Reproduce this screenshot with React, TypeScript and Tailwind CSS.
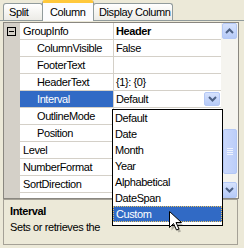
import React from "react";

type Row = {
  name: string;
  value: string;
  bold?: boolean;
  expander?: boolean;
  indent?: boolean;
  selected?: boolean;
};

const rows: Row[] = [
  { name: "GroupInfo", value: "Header", bold: true, expander: true },
  { name: "ColumnVisible", value: "False", indent: true },
  { name: "FooterText", value: "", indent: true },
  { name: "HeaderText", value: "{1}: {0}", indent: true },
  { name: "Interval", value: "Default", indent: true, selected: true },
  { name: "OutlineMode", value: "", indent: true },
  { name: "Position", value: "", indent: true },
  { name: "Level", value: "" },
  { name: "NumberFormat", value: "" },
  { name: "SortDirection", value: "" },
];

const items = ["Default", "Date", "Month", "Year", "Alphabetical", "DateSpan", "Custom"];

function Chevron({ dir }: { dir: "up" | "down" }) {
  return (
    <svg width="9" height="6" viewBox="0 0 9 6">
      <path
        d={dir === "up" ? "M1 5 L4.5 1.5 L8 5" : "M1 1 L4.5 4.5 L8 1"}
        fill="none"
        stroke="#4D6185"
        strokeWidth="2"
      />
    </svg>
  );
}

function XPButton({ dir, className }: { dir: "up" | "down"; className: string }) {
  return (
    <div
      className={`flex items-center justify-center rounded-[2px] border border-[#B4C8F6] bg-gradient-to-b from-[#D6E2FD] to-[#B6CAF7] ${className}`}
    >
      <Chevron dir={dir} />
    </div>
  );
}

export default function App() {
  return (
    <div className="relative w-[244px] h-[248px] overflow-hidden bg-[#ECE9D8] text-[11px] leading-[13px] tracking-[-0.4px] text-black font-['Liberation_Sans',Arial,sans-serif]">
      {/* Tab strip */}
      <div className="flex items-end h-[21px] pl-[3px] border-b border-[#919B9C] whitespace-nowrap">
        <div className="h-[17px] w-[40px] flex items-center pl-[5px] rounded-t-[3px] border border-b-0 border-[#919B9C] bg-gradient-to-b from-white to-[#ECEBE6]">
          Split
        </div>
        <div className="relative z-10 -mb-px -ml-px h-[21px] w-[52px] flex items-center pl-[7px] pt-[1px] rounded-t-[3px] border-x border-[#919B9C] border-t-[3px] border-t-[#FFC83C] bg-[#FCFCFE]">
          Column
        </div>
        <div className="-ml-px h-[17px] w-[80px] flex items-center pl-[5px] rounded-t-[3px] border border-b-0 border-[#919B9C] bg-gradient-to-b from-white to-[#ECEBE6]">
          Display Column
        </div>
      </div>

      {/* Tab page */}
      <div className="pl-[3px] pt-[1px]">
        {/* Property grid */}
        <div className="flex w-[236px] h-[177px] border border-[#8A8780] bg-white">
          <div className="flex w-[217px]">
            <div className="w-[16px] bg-[#D4D0C8]" />
            <div className="flex flex-col w-[201px]">
              {rows.map((r) => (
                <div key={r.name} className="relative flex h-[17px]">
                  {r.expander && (
                    <div className="absolute left-[-13px] top-[4px] w-[9px] h-[9px] border border-black flex items-center justify-center">
                      <div className="w-[5px] h-[1px] bg-black" />
                    </div>
                  )}
                  <div
                    className={`w-[93px] h-[17px] flex items-center border-b border-[#D4D0C8] whitespace-nowrap overflow-hidden ${
                      r.indent ? "pl-[17px]" : "pl-[3px]"
                    } ${r.selected ? "bg-[#316AC5] text-white" : ""}`}
                  >
                    {r.name}
                  </div>
                  <div className="w-[1px] bg-[#D4D0C8]" />
                  <div
                    className={`relative w-[107px] h-[17px] flex items-center pl-[2px] border-b border-[#D4D0C8] whitespace-nowrap overflow-hidden ${
                      r.bold ? "font-bold" : ""
                    }`}
                  >
                    {r.value}
                    {r.selected && (
                      <XPButton dir="down" className="absolute right-[1px] top-[1px] w-[16px] h-[14px]" />
                    )}
                  </div>
                </div>
              ))}
            </div>
          </div>
          {/* Scrollbar */}
          <div className="flex flex-col w-[17px] bg-[#F5F4EF]">
            <XPButton dir="up" className="ml-[1px] w-[15px] h-[16px]" />
            <div className="h-[90px]" />
            <div className="ml-[2px] w-[14px] h-[45px] rounded-[2px] border border-[#B4C8F6] bg-gradient-to-r from-[#CAD8FC] to-[#BCCEF9] flex flex-col items-center justify-center gap-[1px]">
              <div className="w-[6px] h-[1px] bg-[#EEF3FE]" />
              <div className="w-[6px] h-[1px] bg-[#EEF3FE]" />
              <div className="w-[6px] h-[1px] bg-[#EEF3FE]" />
              <div className="w-[6px] h-[1px] bg-[#EEF3FE]" />
            </div>
            <div className="h-[8px]" />
            <XPButton dir="down" className="ml-[1px] w-[15px] h-[16px]" />
          </div>
        </div>

        {/* Help panel */}
        <div className="w-[235px] h-[46px] border border-[#A5A196] pl-[6px] pt-[5px]">
          <div className="font-bold">Interval</div>
          <div className="mt-[3px] whitespace-nowrap">Sets or retrieves the</div>
        </div>
      </div>

      {/* Dropdown list */}
      <div className="absolute left-[112px] top-[109px] w-[111px] h-[117px] border border-black bg-white">
        {items.map((it) => (
          <div
            key={it}
            className={`h-[16px] flex items-center pl-[2px] whitespace-nowrap ${
              it === "Custom" ? "bg-[#316AC5] text-white border border-dotted border-[#E8C060] pl-[1px]" : ""
            }`}
          >
            {it}
          </div>
        ))}
      </div>

      {/* Mouse cursor */}
      <svg className="absolute left-[169px] top-[211px]" width="15" height="22" viewBox="0 0 15 22">
        <path d="M2.5 3.5 L2.5 19.5 L6.5 15.5 L9.5 21.5 L12 20.5 L9 14.5 L14.5 14.5 Z" fill="#000" opacity="0.25" />
        <path d="M0.5 0.5 L0.5 16.5 L4.5 12.5 L7.5 19 L10 18 L7 11.5 L12.5 11.5 Z" fill="#fff" stroke="#000" strokeWidth="1" />
      </svg>
    </div>
  );
}
